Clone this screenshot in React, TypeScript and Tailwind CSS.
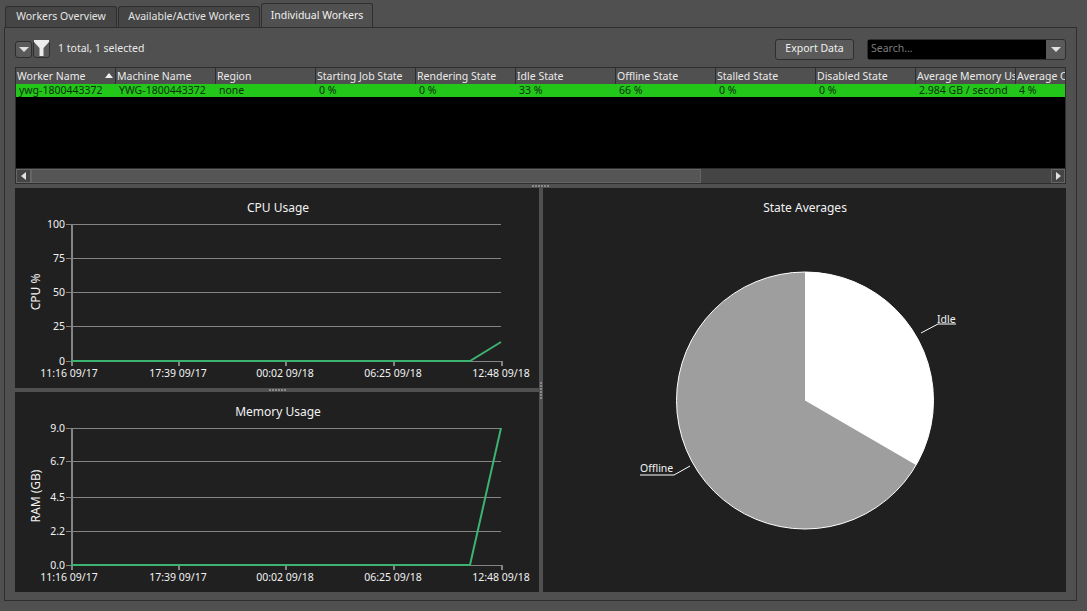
const font = { fontFamily: '"Noto Sans", Tahoma, sans-serif' };

const columns = [
    { name: 'Worker Name', value: 'ywg-1800443372' },
    { name: 'Machine Name', value: 'YWG-1800443372' },
    { name: 'Region', value: 'none' },
    { name: 'Starting Job State', value: '0 %' },
    { name: 'Rendering State', value: '0 %' },
    { name: 'Idle State', value: '33 %' },
    { name: 'Offline State', value: '66 %' },
    { name: 'Stalled State', value: '0 %' },
    { name: 'Disabled State', value: '0 %' },
    { name: 'Average Memory Usage', value: '2.984 GB / second' },
    { name: 'Average CPU Usage', value: '4 %' },
];

const xLabels = ['11:16 09/17', '17:39 09/17', '00:02 09/18', '06:25 09/18', '12:48 09/18'];
const xTicks = [56, 163, 270, 378, 486];

function Caret() {
    return <span className="h-0 w-0 border-x-[5px] border-t-[5px] border-x-transparent border-t-[#e0e0e0]" />;
}

function Tab({ label, active, width }: { label: string; active?: boolean; width: string }) {
    return (
        <div
            className={`${width} flex items-center justify-center rounded-t-[3px] border border-b-0 border-[#2e2e2e] text-[10.5px] ${
                active ? 'h-6 bg-[#505050] text-[#f0f0f0]' : 'h-[21px] bg-[#454545] text-[#e4e4e4]'
            }`}
        >
            {label}
        </div>
    );
}

function LineChart({
    title,
    yTitle,
    yLabels,
    line,
}: {
    title: string;
    yTitle: string;
    yLabels: { label: string; y: number }[];
    line: string;
}) {
    return (
        <div className="h-[200px] bg-[#202020]">
            <svg width="524" height="200" className="block" shapeRendering="crispEdges">
                <text x="263" y="24" textAnchor="middle" fill="#f2f2f2" fontSize="12">
                    {title}
                </text>
                <text
                    x="0"
                    y="0"
                    transform="translate(25 104) rotate(-90)"
                    textAnchor="middle"
                    fill="#f2f2f2"
                    fontSize="12"
                >
                    {yTitle}
                </text>
                {yLabels.map((t) => (
                    <g key={t.label}>
                        <line x1="51" x2="486" y1={t.y + 0.5} y2={t.y + 0.5} stroke="#848484" />
                        <text x="50" y={t.y + 4} textAnchor="end" fill="#f2f2f2" fontSize="10.5">
                            {t.label}
                        </text>
                    </g>
                ))}
                <line x1="56.5" x2="56.5" y1="36" y2="178" stroke="#848484" strokeWidth="2" />
                {xTicks.map((x, i) => (
                    <g key={x}>
                        <line x1={x + 0.5} x2={x + 0.5} y1="173" y2="178" stroke="#848484" strokeWidth="2" />
                        <text x={i === 0 ? x - 2 : x} y="189" textAnchor="middle" fill="#f2f2f2" fontSize="10.5">
                            {xLabels[i]}
                        </text>
                    </g>
                ))}
                <polyline
                    points={line}
                    fill="none"
                    stroke="#3cb371"
                    strokeWidth="2"
                    shapeRendering="auto"
                />
            </svg>
        </div>
    );
}

function PieChart() {
    return (
        <svg width="523" height="404" className="block">
            <text x="262" y="24" textAnchor="middle" fill="#f2f2f2" fontSize="12">
                State Averages
            </text>
            <circle cx="262" cy="212.5" r="128.5" fill="#9e9e9e" stroke="#ffffff" />
            <path d="M262 212.5 L262 84 A128.5 128.5 0 0 1 373 277 Z" fill="#ffffff" />
            <polyline points="378,145 395,136 413,136" fill="none" stroke="#ffffff" />
            <polyline points="147,278 131,287 97,287" fill="none" stroke="#ffffff" />
            <text x="394" y="135" fill="#f2f2f2" fontSize="10.5">
                Idle
            </text>
            <text x="97" y="287" fill="#f2f2f2" fontSize="10.5" dy="-3">
                Offline
            </text>
        </svg>
    );
}

function GripH() {
    return (
        <div className="flex h-1 items-center justify-center gap-px">
            {[0, 1, 2, 3, 4, 5].map((i) => (
                <span key={i} className="h-0.5 w-0.5 bg-[#8a8a8a]" />
            ))}
        </div>
    );
}

export default function App() {
    return (
        <div className="h-[611px] w-[1087px] overflow-hidden bg-[#505050] pl-1 pr-2.5 pt-[3px]" style={font}>
            {/* Tabs */}
            <div className="flex h-6 items-end gap-px pl-px">
                <Tab label="Workers Overview" width="w-[112px]" />
                <Tab label="Available/Active Workers" width="w-[142px]" />
                <Tab label="Individual Workers" width="w-[112px]" active />
            </div>

            <div className="h-[574px] border border-[#2e2e2e] px-2.5 pt-[10px]">
                {/* Toolbar */}
                <div className="flex h-[22px] items-center">
                    <button className="flex h-[17px] w-[17px] items-center justify-center rounded-[3px] border border-[#2e2e2e] bg-[#5a5a5a]">
                        <Caret />
                    </button>
                    <button className="ml-px flex h-[17px] w-[17px] items-start justify-center overflow-visible rounded-[3px] border border-[#2e2e2e] bg-[#5a5a5a]">
                        <svg width="15" height="16" viewBox="0 0 15 16" className="-mt-0.5 shrink-0">
                            <polygon points="0,0 15,0 15,2 9.5,8 9.5,16 5.5,16 5.5,8 0,2" fill="#ececec" />
                        </svg>
                    </button>
                    <span className="ml-2 text-[10.5px] text-[#eaeaea]">1 total, 1 selected</span>
                    <button className="ml-auto flex h-[21px] w-[79px] items-center justify-center rounded-[3px] border border-[#2e2e2e] bg-[#5a5a5a] text-[10.5px] text-[#f0f0f0]">
                        Export Data
                    </button>
                    <div className="ml-[13px] flex h-[21px] w-[199px] rounded-[3px] border border-[#2e2e2e] bg-[#5a5a5a]">
                        <div className="flex w-[178px] items-center bg-black pl-[3px] text-[10.5px] text-[#7c7c7c]">
                            Search...
                        </div>
                        <div className="flex flex-1 items-center justify-center">
                            <Caret />
                        </div>
                    </div>
                </div>

                {/* Workers table */}
                <div className="mt-[7px] h-[102px] w-[1051px] overflow-hidden border border-[#2e2e2e] bg-black">
                    <div className="flex h-4 bg-[#505050]">
                        {columns.map((c, i) => (
                            <div
                                key={c.name}
                                className="relative h-4 w-[100px] shrink-0 overflow-hidden whitespace-nowrap border-r border-[#2e2e2e] pl-px text-[10.5px] leading-[16px] text-[#eaeaea]"
                            >
                                {c.name}
                                {i === 0 && (
                                    <span className="absolute right-[2px] top-[5px] h-0 w-0 border-x-[4px] border-b-[5px] border-x-transparent border-b-[#f0f0f0]" />
                                )}
                            </div>
                        ))}
                    </div>
                    <div className="flex h-[13px] bg-[#22c71a]">
                        {columns.map((c) => (
                            <div
                                key={c.name}
                                className="h-[13px] w-[100px] shrink-0 overflow-hidden whitespace-nowrap pl-[3px] text-[10.5px] leading-[13px] text-[#0e300c]"
                            >
                                {c.value}
                            </div>
                        ))}
                    </div>
                </div>

                {/* Horizontal scrollbar */}
                <div className="flex h-[15px] w-[1051px] border border-t-0 border-[#2e2e2e] bg-[#454545]">
                    <div className="flex w-[15px] items-center justify-center border border-[#666666]">
                        <span className="h-0 w-0 border-y-[4px] border-r-[5px] border-y-transparent border-r-[#e0e0e0]" />
                    </div>
                    <div className="w-[670px] border border-[#666666] bg-[#555555]" />
                    <div className="flex-1" />
                    <div className="flex w-[14px] items-center justify-center border border-[#666666]">
                        <span className="h-0 w-0 border-y-[4px] border-l-[5px] border-y-transparent border-l-[#e0e0e0]" />
                    </div>
                </div>

                <GripH />

                {/* Charts */}
                <div className="flex w-[1051px]">
                    <div className="w-[524px]">
                        <LineChart
                            title="CPU Usage"
                            yTitle="CPU %"
                            yLabels={[
                                { label: '100', y: 36 },
                                { label: '75', y: 70 },
                                { label: '50', y: 104 },
                                { label: '25', y: 138 },
                                { label: '0', y: 173 },
                            ]}
                            line="56,173 455,173 486,154"
                        />
                        <GripH />
                        <LineChart
                            title="Memory Usage"
                            yTitle="RAM (GB)"
                            yLabels={[
                                { label: '9.0', y: 36 },
                                { label: '6.7', y: 69 },
                                { label: '4.5', y: 105 },
                                { label: '2.2', y: 139 },
                                { label: '0.0', y: 173 },
                            ]}
                            line="56,173 455,173 486,36"
                        />
                    </div>
                    <div className="flex w-1 flex-col items-center justify-center gap-px">
                        {[0, 1, 2, 3, 4, 5].map((i) => (
                            <span key={i} className="h-0.5 w-0.5 bg-[#8a8a8a]" />
                        ))}
                    </div>
                    <div className="h-[404px] w-[523px] bg-[#202020]">
                        <PieChart />
                    </div>
                </div>
            </div>
        </div>
    );
}
